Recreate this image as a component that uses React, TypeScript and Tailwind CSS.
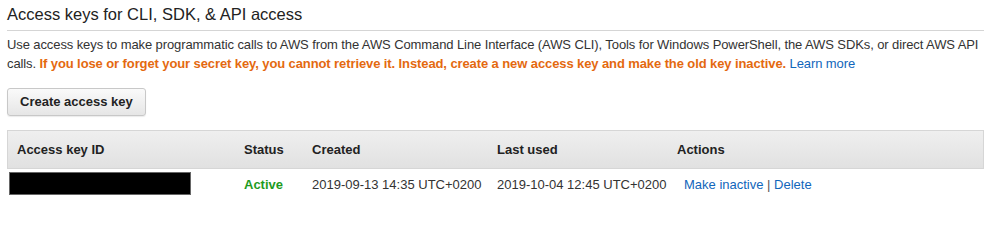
const rows = [
  {
    status: 'Active',
    created: '2019-09-13 14:35 UTC+0200',
    lastUsed: '2019-10-04 12:45 UTC+0200',
  },
];

const cols = 'grid grid-cols-[226px_68px_185px_180px_1fr]';

export default function App() {
  return (
    <div className="w-[1000px] h-[230px] bg-white pl-[7px] pr-[16px] pt-[3px] font-['Liberation_Sans',Arial,sans-serif] text-[13px] text-[#333]">
      <h2 className="text-[16.5px] leading-[22px] text-[#222] pb-[5px] border-b border-[#d5d5d5]">
        Access keys for CLI, SDK, &amp; API access
      </h2>
      <p className="mt-[4px] leading-[19px] tracking-[-0.1px] text-[#333]">
        Use access keys to make programmatic calls to AWS from the AWS Command Line Interface (AWS CLI), Tools for
        Windows PowerShell, the AWS SDKs, or direct AWS API calls.{' '}
        <span className="font-bold text-[#e4690f]">
          If you lose or forget your secret key, you cannot retrieve it. Instead, create a new access key and make the
          old key inactive.
        </span>{' '}
        <a href="#" className="text-[#1166bb]">
          Learn more
        </a>
      </p>
      <button className="mt-[15px] h-[28px] px-[12px] rounded-[3px] border border-[#c8c8c8] bg-linear-to-b from-[#fafafa] to-[#e6e6e6] font-bold text-[#222] leading-[16px] shadow-[0_1px_1px_rgba(0,0,0,0.08)]">
        Create access key
      </button>

      <div className="mt-[14px]">
        <div className={`${cols} h-[39px] items-center border border-[#d6d6d6] bg-linear-to-b from-[#efefef] to-[#e1e1e1] font-bold text-[#222] leading-[16px]`}>
          <div className="pl-[9px]">Access key ID</div>
          <div className="pl-[10px]">Status</div>
          <div className="pl-[10px]">Created</div>
          <div className="pl-[10px]">Last used</div>
          <div className="pl-[10px]">Actions</div>
        </div>
        {rows.map(r => (
          <div key={r.created} className={`${cols} border-x border-transparent leading-[16px]`}>
            <div className="pl-[1px] pt-[3px]">
              <div className="w-[182px] h-[23px] bg-black border border-[#666]" />
            </div>
            <div className="pl-[10px] pt-[8px] font-bold text-[#1e9b1e]">{r.status}</div>
            <div className="pl-[10px] pt-[8px]">{r.created}</div>
            <div className="pl-[10px] pt-[8px]">{r.lastUsed}</div>
            <div className="pl-[17px] pt-[8px]">
              <a href="#" className="text-[#1166bb]">Make inactive</a>
              <span className="text-[#555]"> | </span>
              <a href="#" className="text-[#1166bb]">Delete</a>
            </div>
          </div>
        ))}
      </div>
    </div>
  );
}
